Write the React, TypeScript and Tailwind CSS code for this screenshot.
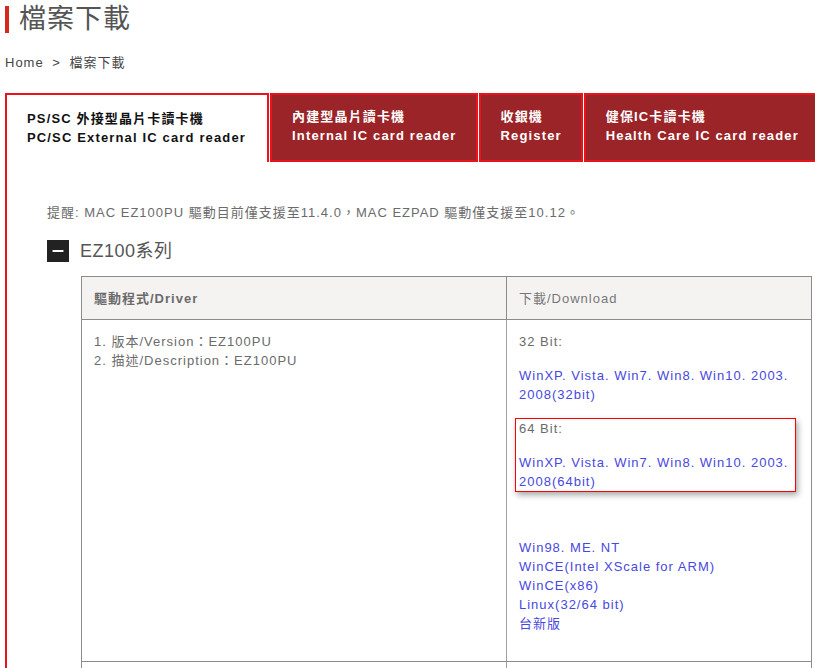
import { Minus } from 'lucide-react';

type Tab = {
  zh: string;
  en: string;
  active?: boolean;
};

const tabs: Tab[] = [
  { zh: 'PS/SC 外接型晶片卡讀卡機', en: 'PC/SC External IC card reader', active: true },
  { zh: '內建型晶片讀卡機', en: 'Internal IC card reader' },
  { zh: '收銀機', en: 'Register' },
  { zh: '健保IC卡讀卡機', en: 'Health Care IC card reader' },
];

const otherLinks = [
  'Win98. ME. NT',
  'WinCE(Intel XScale for ARM)',
  'WinCE(x86)',
  'Linux(32/64 bit)',
  '台新版',
];

function TabItem({ tab }: { tab: Tab }) {
  return (
    <div
      className={
        tab.active
          ? 'h-[69px] shrink-0 border-2 border-b-0 border-[#e8141c] bg-white pl-[20px] pr-[21px] pt-[14px] text-[#111]'
          : 'h-[69px] shrink-0 border-2 border-[#e8141c] bg-[#9b2428] pl-[20px] pr-[19px] pt-[12px] text-white'
      }
    >
      <div className="whitespace-nowrap text-[13px] font-bold leading-[19px] tracking-[1.15px]">{tab.zh}</div>
      <div className="whitespace-nowrap text-[13px] font-bold leading-[19px] tracking-[1.15px]">{tab.en}</div>
    </div>
  );
}

export default function App() {
  return (
    <div className="h-[668px] w-full overflow-hidden bg-white font-['Liberation_Sans','Noto_Sans_CJK_TC',sans-serif]">
      <div className="w-[900px]">
        {/* page title */}
        <div className="flex items-center gap-[10px] pl-[5px] pt-[6px]">
          <span className="h-[27px] w-[4px] bg-[#d7281e]" />
          <h1 className="text-[27px] font-normal leading-[27px] tracking-[1px] text-[#555]">檔案下載</h1>
        </div>

        {/* breadcrumb */}
        <div className="mt-[20px] pl-[5px] text-[13px] leading-[20px] tracking-[1px] text-[#444]">
          Home <span className="mx-[4px]">&gt;</span> 檔案下載
        </div>

        {/* tabs */}
        <div className="mt-[20px] flex gap-px pl-[5px]">
          {tabs.map((t) => (
            <TabItem key={t.en} tab={t} />
          ))}
        </div>

        {/* panel */}
        <div className="ml-[5px] border-l-2 border-[#e8141c] pl-[40px] pt-[41px]">
          <p className="text-[13px] leading-[19px] tracking-[1px] text-[#6b6b6b]">
            提醒: MAC EZ100PU 驅動目前僅支援至11.4.0，MAC EZPAD 驅動僅支援至10.12。
          </p>

          <div className="mt-[18px] flex items-center gap-[11px]">
            <span className="flex h-[22px] w-[22px] items-center justify-center bg-[#222]">
              <Minus className="h-[16px] w-[16px] text-white" strokeWidth={3} />
            </span>
            <h2 className="text-[18px] leading-[22px] tracking-[0.5px] text-[#555]">EZ100系列</h2>
          </div>

          {/* table */}
          <div className="ml-[34px] mt-[14px] w-[731px] border border-[#8c8c8c] text-[13px] leading-[19px] tracking-[1px]">
            <div className="flex h-[43px] border-b border-[#8c8c8c] bg-[#f5f3f1]">
              <div className="flex w-[425px] items-center border-r border-[#8c8c8c] px-[12px] font-bold text-[#6b6b6b]">
                驅動程式/Driver
              </div>
              <div className="flex flex-1 items-center px-[12px] text-[#777]">下載/Download</div>
            </div>

            <div className="flex h-[342px] border-b border-[#8c8c8c]">
              <div className="w-[425px] border-r border-[#a0a0a0] px-[12px] pt-[12px] text-[#6b6b6b]">
                <p>1. 版本/Version：EZ100PU</p>
                <p>2. 描述/Description：EZ100PU</p>
              </div>
              <div className="flex-1 px-[12px] pt-[12px] text-[#6b6b6b]">
                <p>32 Bit:</p>
                <p className="mt-[15px] text-[#4848e0]">
                  WinXP. Vista. Win7. Win8. Win10. 2003.
                  <br />
                  2008(32bit)
                </p>

                <div className="-ml-[4px] mt-[14px] w-[281px] border border-[#f00] pl-[3px] shadow-[2px_3px_6px_rgba(0,0,0,0.35)]">
                  <p>64 Bit:</p>
                  <p className="mt-[15px] text-[#4848e0]">
                    WinXP. Vista. Win7. Win8. Win10. 2003.
                    <br />
                    2008(64bit)
                  </p>
                </div>

                <div className="mt-[46px] text-[#4848e0]">
                  {otherLinks.map((l) => (
                    <p key={l}>{l}</p>
                  ))}
                </div>
              </div>
            </div>

            <div className="flex h-[120px]">
              <div className="w-[425px] border-r border-[#a0a0a0]" />
              <div className="flex-1" />
            </div>
          </div>
        </div>
      </div>
    </div>
  );
}
